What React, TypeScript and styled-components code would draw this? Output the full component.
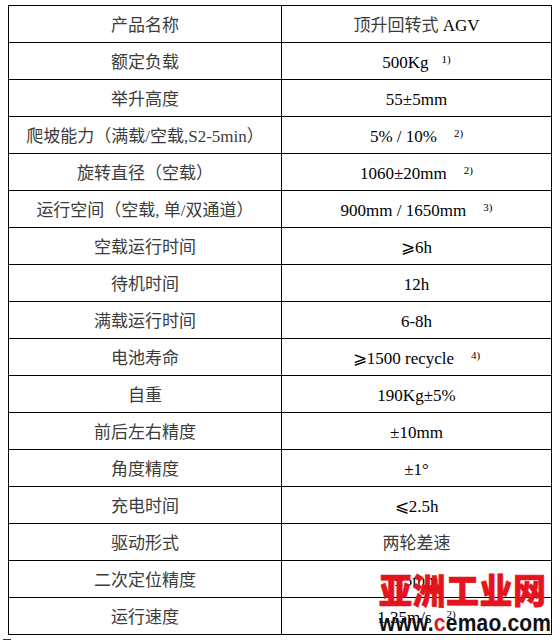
import React from "react";
import styled, { createGlobalStyle } from "styled-components";

const Global = createGlobalStyle`
  html, body { margin: 0; padding: 0; background: #fff; }
  body { font-family: "Liberation Serif", "Noto Sans CJK SC", serif; }
`;

const Page = styled.div`
  position: relative;
  width: 559px;
  height: 641px;
  padding-top: 5px;
  box-sizing: border-box;
  overflow: hidden;
`;

const Table = styled.table`
  margin-left: 8px;
  border-collapse: collapse;
  table-layout: fixed;
  width: 543px;
`;

const Row = styled.tr``;

const Cell = styled.td<{ $label?: boolean }>`
  border: 1px solid #000;
  height: 37px;
  padding: 3px 0 0 0;
  box-sizing: border-box;
  text-align: center;
  vertical-align: middle;
  font-family: "Liberation Serif", "Noto Sans CJK SC", serif;
  font-size: 17px;
  line-height: 20px;
  white-space: nowrap;
  color: ${(p) => (p.$label ? "#3c3c3c" : "#000")};
`;

const Cjk = styled.span`
  color: #3c3c3c;
`;

const Sup = styled.sup<{ $gap: number }>`
  font-size: 11px;
  line-height: 0;
  vertical-align: 5px;
  margin-left: ${(p) => p.$gap}px;
`;

const Caret = styled.div`
  width: 8px;
  height: 1px;
  margin: 4px 0 0 3px;
  background: #1a1aff;
`;

const Watermark = styled.div`
  position: absolute;
  left: 379px;
  top: 569px;
  display: flex;
  flex-direction: column;
  align-items: flex-start;
  pointer-events: none;
`;

const WmTitle = styled.div`
  font-family: "Noto Sans CJK SC", sans-serif;
  font-weight: 900;
  font-size: 33px;
  line-height: 40px;
  letter-spacing: 0.5px;
  color: #e5131d;
  -webkit-text-stroke: 0.6px #e5131d;
  transform: scaleY(1.08);
  transform-origin: center;
`;

const WmUrl = styled.div`
  margin-top: 3px;
  font-family: "Liberation Sans", Arial, sans-serif;
  font-weight: 700;
  font-size: 21px;
  line-height: 18px;
  letter-spacing: 0.2px;
  color: #111;
  transform: scaleY(1.18);
  transform-origin: top left;
`;

const RedC = styled.span`
  color: #e5131d;
`;

type Item = { k: string; v: React.ReactNode; sup?: string; gap?: number };

const rows: Item[] = [
  { k: "产品名称", v: <><Cjk>顶升回转式</Cjk> AGV</> },
  { k: "额定负载", v: "500Kg", sup: "1)", gap: 13 },
  { k: "举升高度", v: "55±5mm" },
  { k: "爬坡能力（满载/空载,S2-5min）", v: "5% / 10%", sup: "2)", gap: 17 },
  { k: "旋转直径（空载）", v: "1060±20mm", sup: "2)", gap: 17 },
  { k: "运行空间（空载, 单/双通道）", v: "900mm / 1650mm", sup: "3)", gap: 17 },
  { k: "空载运行时间", v: "⩾6h" },
  { k: "待机时间", v: "12h" },
  { k: "满载运行时间", v: "6-8h" },
  { k: "电池寿命", v: "⩾1500 recycle", sup: "4)", gap: 17 },
  { k: "自重", v: "190Kg±5%" },
  { k: "前后左右精度", v: "±10mm" },
  { k: "角度精度", v: "±1°" },
  { k: "充电时间", v: "⩽2.5h" },
  { k: "驱动形式", v: <Cjk>两轮差速</Cjk> },
  { k: "二次定位精度", v: "±5mm" },
  { k: "运行速度", v: "1.35m/s", sup: "2)", gap: 15 },
];

export default function App() {
  return (
    <Page>
      <Global />
      <Table>
        <colgroup>
          <col style={{ width: 273 }} />
          <col style={{ width: 270 }} />
        </colgroup>
        <tbody>
          {rows.map((r, i) => (
            <Row key={i}>
              <Cell $label>{r.k}</Cell>
              <Cell>
                {r.v}
                {r.sup && <Sup $gap={r.gap ?? 17}>{r.sup}</Sup>}
              </Cell>
            </Row>
          ))}
        </tbody>
      </Table>
      <Caret />
      <Watermark>
        <WmTitle>亚洲工业网</WmTitle>
        <WmUrl>
          www.<RedC>c</RedC>emao.com
        </WmUrl>
      </Watermark>
    </Page>
  );
}
